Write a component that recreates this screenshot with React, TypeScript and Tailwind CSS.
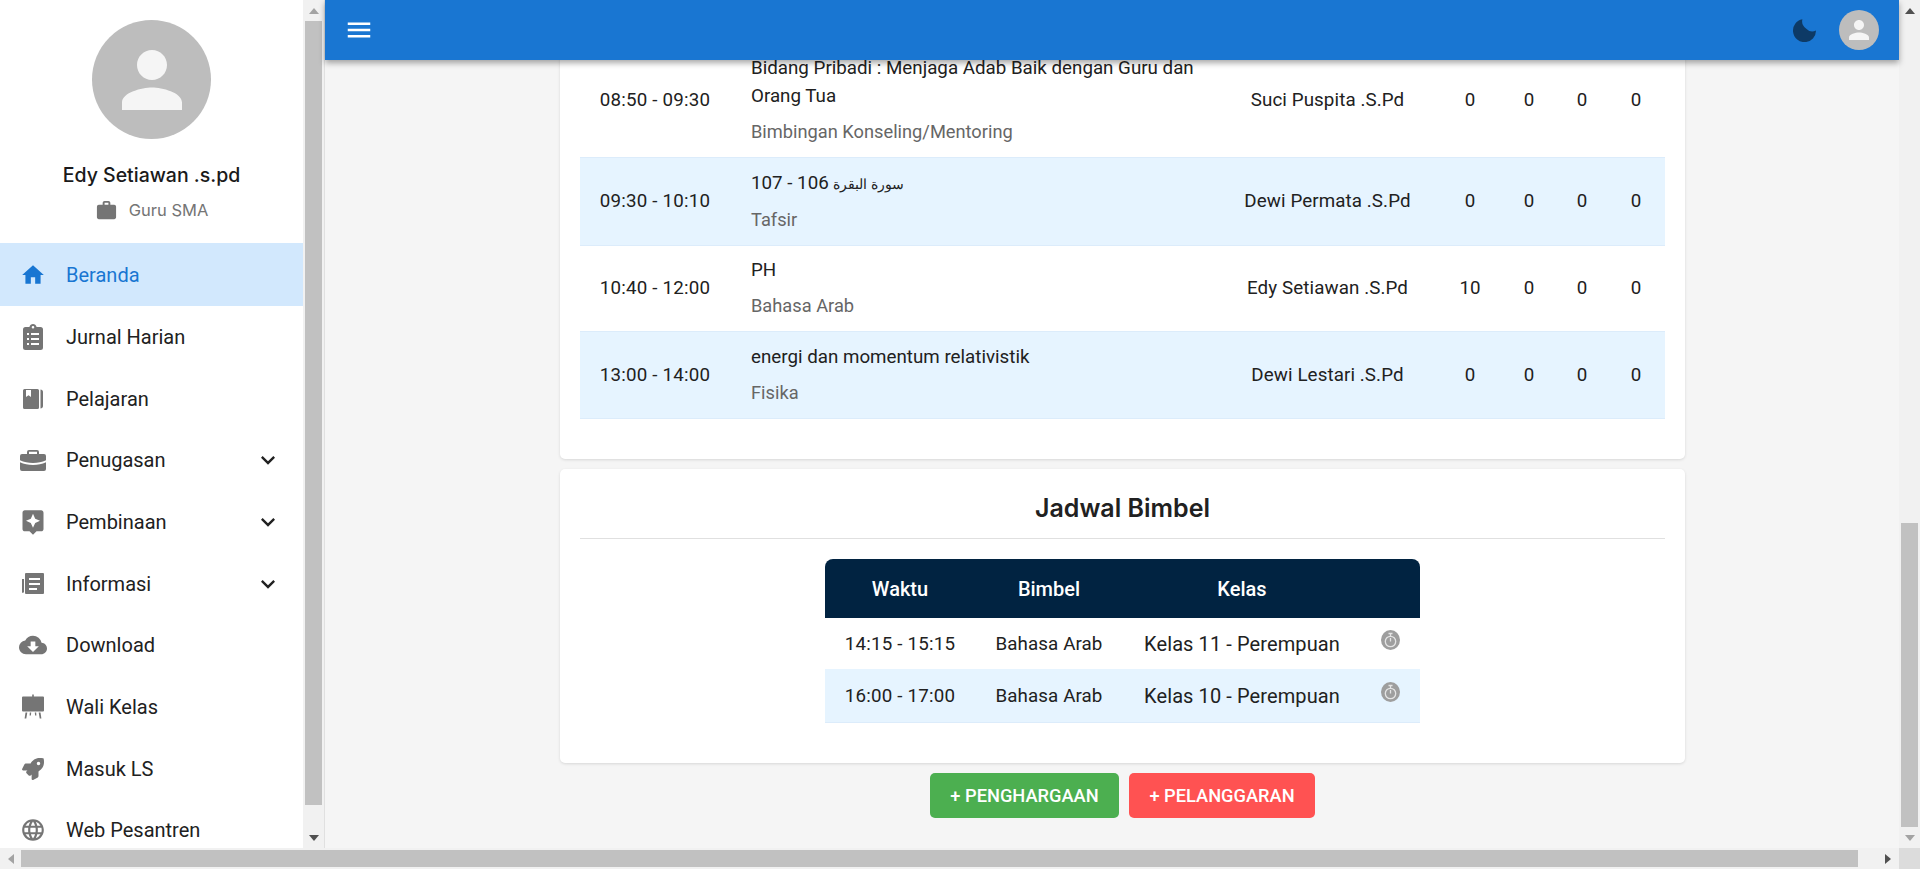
import React from 'react';
import { FaRocket } from 'react-icons/fa';
import { MdAssistant, MdCloudDownload, MdExpandMore, MdHome, MdLanguage, MdMenu, MdPerson, MdWork } from 'react-icons/md';

type IconProps = { className?: string };

const ClipboardListIcon = ({ className }: IconProps) => (
  <svg viewBox="0 0 20 26" className={className} fill="currentColor">
    <path
      fillRule="evenodd"
      d="M2.500 3H6.400C6.900 1.300 8.300 0 10 0s3.100 1.300 3.600 3h3.900A2.500 2.500 0 0 1 20 5.500v18a2.500 2.500 0 0 1-2.500 2.500h-15A2.500 2.500 0 0 1 0 23.500v-18A2.500 2.500 0 0 1 2.500 3zM10 2a1.300 1.300 0 1 0 0 2.600A1.300 1.300 0 0 0 10 2zM4 9v2h2V9H4zm4 0v2h8V9H8zm-4 5v2h2v-2H4zm4 0v2h8v-2H8zm-4 5v2h2v-2H4zm4 0v2h8v-2H8z"
    />
  </svg>
);

const BookIcon = ({ className }: IconProps) => (
  <svg viewBox="0 0 20 20" className={className} fill="currentColor">
    <path fillRule="evenodd" d="M1.500 0h13A1.500 1.500 0 0 1 16 1.500v17a1.500 1.500 0 0 1-1.500 1.500h-13A1.500 1.500 0 0 1 0 18.500v-17A1.500 1.500 0 0 1 1.500 0zM3 1v7l2.500-1.800L8 8V1H3z" />
    <path d="M17.500 .5c1.500.3 2.500 1 2.500 2.500v14c0 1.500-1 2.200-2.500 2.500V.5z" />
  </svg>
);

const BriefcaseIcon = ({ className }: IconProps) => (
  <svg viewBox="0 0 26 21" className={className} fill="currentColor">
    <path fillRule="evenodd" d="M9 0h8a2 2 0 0 1 2 2v2h5a2 2 0 0 1 2 2v4.200c-4 1.800-8 2.800-13 2.800S4 12 0 10.200V6a2 2 0 0 1 2-2h5V2a2 2 0 0 1 2-2zm0 1.800V4h8V1.800H9z" />
    <path d="M0 12.200C4 14 8 15 13 15s9-1 13-2.800V19a2 2 0 0 1-2 2H2a2 2 0 0 1-2-2v-6.800z" />
  </svg>
);

const NewspaperIcon = ({ className }: IconProps) => (
  <svg viewBox="0 0 22 21" className={className} fill="currentColor">
    <path fillRule="evenodd" d="M4 0h17a1 1 0 0 1 1 1v19a1 1 0 0 1-1 1H4a1 1 0 0 1-1-1V1a1 1 0 0 1 1-1zm3 5v2h11V5H7zm0 5v2h11v-2H7zm0 5v2h8v-2H7z" />
    <path d="M0 6h2v13h-.5v1H1a1 1 0 0 1-1-1V6z" />
  </svg>
);

const EaselIcon = ({ className }: IconProps) => (
  <svg viewBox="0 0 24 24" className={className} fill="currentColor">
    <path d="M11.200 0h1.600v2H22a1 1 0 0 1 1 1v13a1 1 0 0 1-1 1H2a1 1 0 0 1-1-1V3a1 1 0 0 1 1-1h9.200V0z" />
    <path d="M4.500 18h1.800l-1 6H3.600l.9-6zM17.700 18h1.800l.9 6h-1.700l-1-6zM8.800 18h1.400l-.3 3H8.600l.2-3zM13.800 18h1.400l.2 3h-1.300l-.3-3z" />
  </svg>
);

const MoonIcon = () => (
  <svg viewBox="0 0 22 22" className="w-[23px] h-[23px] text-[#0d3a66]" fill="currentColor">
    <path d="M9 0.300A11 11 0 1 0 22 11 8 8 0 0 1 13 9.500 8 8 0 0 1 9 0.300z" />
  </svg>
);

const TimerIcon = () => (
  <svg viewBox="0 0 19 20" className="w-[19px] h-[20px]">
    <ellipse cx="9.500" cy="10" rx="9.500" ry="10" fill="#9e9e9e" />
    <g fill="none" stroke="#e4e4e4" strokeWidth="1.300">
      <circle cx="9.500" cy="11.500" r="5.200" />
      <path d="M7.500 3.500h4M9.500 3.500v3M9.500 8v3.500" />
    </g>
  </svg>
);

const Arrow = ({ dir, dark }: { dir: 'up' | 'down' | 'left' | 'right'; dark?: boolean }) => {
  const points = { up: '0,8 5,2 10,8', down: '0,2 10,2 5,8', left: '8,0 8,10 2,5', right: '2,0 2,10 8,5' }[dir];
  return (
    <svg viewBox="0 0 10 10" className="w-[10px] h-[10px]">
      <polygon points={points} fill={dark ? '#505050' : '#a3a3a3'} />
    </svg>
  );
};

const VScrollbar = ({ before, thumb, upDark }: { before: string; thumb: string; upDark?: boolean }) => (
  <div className="w-[21px] shrink-0 bg-[#f1f1f1] flex flex-col items-center">
    <div className="h-[21px] shrink-0 flex items-center justify-center"><Arrow dir="up" dark={upDark} /></div>
    <div className={`w-[17px] ${before}`} />
    <div className={`w-[17px] bg-[#c1c1c1] ${thumb}`} />
    <div className="flex-1" />
    <div className="h-[21px] shrink-0 flex items-center justify-center"><Arrow dir="down" dark={!upDark} /></div>
  </div>
);

const navItems = [
  { label: 'Beranda', icon: <MdHome className="w-[26px] h-[26px]" />, active: true },
  { label: 'Jurnal Harian', icon: <ClipboardListIcon className="w-[20px] h-[26px]" /> },
  { label: 'Pelajaran', icon: <BookIcon className="w-[20px] h-[20px]" /> },
  { label: 'Penugasan', icon: <BriefcaseIcon className="w-[26px] h-[21px]" />, more: true },
  { label: 'Pembinaan', icon: <MdAssistant className="w-[28px] h-[28px]" />, more: true },
  { label: 'Informasi', icon: <NewspaperIcon className="w-[22px] h-[21px]" />, more: true },
  { label: 'Download', icon: <MdCloudDownload className="w-[28px] h-[28px]" /> },
  { label: 'Wali Kelas', icon: <EaselIcon className="w-[24px] h-[25px]" /> },
  { label: 'Masuk LS', icon: <FaRocket className="w-[22px] h-[22px]" /> },
  { label: 'Web Pesantren', icon: <MdLanguage className="w-[26px] h-[26px]" /> },
];

const schedule = [
  { time: '08:50 - 09:30', title: 'Bidang Pribadi : Menjaga Adab Baik dengan Guru dan Orang Tua', subject: 'Bimbingan Konseling/Mentoring', teacher: 'Suci Puspita .S.Pd', nums: [0, 0, 0, 0], height: '' },
  { time: '09:30 - 10:10', title: <><span className="text-[14px]">سورة البقرة</span> 106 - 107</>, subject: 'Tafsir', teacher: 'Dewi Permata .S.Pd', nums: [0, 0, 0, 0], height: 'h-[88px]' },
  { time: '10:40 - 12:00', title: 'PH', subject: 'Bahasa Arab', teacher: 'Edy Setiawan .S.Pd', nums: [10, 0, 0, 0], height: 'h-[86px]' },
  { time: '13:00 - 14:00', title: 'energi dan momentum relativistik', subject: 'Fisika', teacher: 'Dewi Lestari .S.Pd', nums: [0, 0, 0, 0], height: 'h-[87px]' },
];

const bimbel = [
  { time: '14:15 - 15:15', name: 'Bahasa Arab', kelas: 'Kelas 11 - Perempuan' },
  { time: '16:00 - 17:00', name: 'Bahasa Arab', kelas: 'Kelas 10 - Perempuan' },
];

const Sidebar = () => (
  <aside className="w-[303px] shrink-0 bg-white overflow-hidden flex flex-col">
    <div className="pt-5 flex flex-col items-center h-[243px] shrink-0">
      <div className="w-[119px] h-[119px] rounded-full bg-[#bdbdbd] flex items-center justify-center text-[#f5f5f5]">
        <MdPerson className="w-[90px] h-[90px]" />
      </div>
      <div className="mt-[22px] font-['Inter',sans-serif] text-[19.500px] leading-7 font-medium text-[#1a1a1a]">Edy Setiawan .s.pd</div>
      <div className="mt-[9px] flex items-center gap-[11px] text-[#757575]">
        <MdWork className="w-[23px] h-[23px]" />
        <span className="font-['Inter',sans-serif] text-[16.500px] leading-6">Guru SMA</span>
      </div>
    </div>
    <nav className="flex flex-col">
      {navItems.map((item) => (
        <div
          key={item.label}
          className={`shrink-0 flex items-center pr-[21px] ${item.active ? 'h-[63px] bg-[#d2e8fd] text-[#1976d2]' : 'h-[61.700px] text-[#212121]'}`}
        >
          <div className={`w-[66px] shrink-0 flex justify-center ${item.active ? '' : 'text-[#757575]'}`}>{item.icon}</div>
          <span className="flex-1 text-[20px]">{item.label}</span>
          {item.more && <MdExpandMore className="w-[28px] h-[28px] text-[#212121]" />}
        </div>
      ))}
    </nav>
  </aside>
);

const Header = () => (
  <header className="relative z-10 h-[60px] shrink-0 bg-[#1976d2] flex items-center pl-[19px] pr-[20px] shadow-[0_3px_6px_rgba(0,0,0,0.35)]">
    <MdMenu className="w-[30px] h-[30px] text-white" />
    <div className="flex-1" />
    <MoonIcon />
    <div className="ml-[23px] w-10 h-10 rounded-full bg-[#bdbdbd] flex items-center justify-center text-[#f5f5f5]">
      <MdPerson className="w-[30px] h-[30px]" />
    </div>
  </header>
);

const ScheduleTable = () => (
  <table className="w-full table-fixed border-collapse text-[18.750px] text-[#212121]">
    <colgroup>
      <col className="w-[150px]" />
      <col />
      <col className="w-[223px]" />
      <col className="w-[62px]" />
      <col className="w-[56px]" />
      <col className="w-[50px]" />
      <col className="w-[58px]" />
    </colgroup>
    <tbody>
      {schedule.map((row, i) => (
        <tr key={row.time} className={`border-b border-[#dcecfb] ${row.height} ${i % 2 === 1 ? 'bg-[#e6f4ff]' : 'bg-white'}`}>
          <td className="text-center tracking-[0.2px]">{row.time}</td>
          <td className="pl-[21px] pt-[10px] pb-[13px]">
            <div className="leading-7">{row.title}</div>
            <div className="mt-[10px] leading-6 text-[18.250px] text-[#666666]">{row.subject}</div>
          </td>
          <td className="text-center tracking-[0.1px]">{row.teacher}</td>
          {row.nums.map((n, j) => (
            <td key={j} className="text-center">{n}</td>
          ))}
        </tr>
      ))}
    </tbody>
  </table>
);

const BimbelTable = () => (
  <table className="w-[595px] mx-auto table-fixed border-separate border-spacing-0 text-[#212121]">
    <colgroup>
      <col className="w-[150px]" />
      <col className="w-[148px]" />
      <col className="w-[238px]" />
      <col className="w-[59px]" />
    </colgroup>
    <thead>
      <tr className="text-white text-[20px]">
        <th className="h-[59px] font-medium bg-[#012341] rounded-tl-[8px]">Waktu</th>
        <th className="font-medium bg-[#012341]">Bimbel</th>
        <th className="font-medium bg-[#012341]">Kelas</th>
        <th className="bg-[#012341] rounded-tr-[8px]" />
      </tr>
    </thead>
    <tbody>
      {bimbel.map((row, i) => (
        <tr key={row.time} className={i % 2 === 1 ? 'bg-[#e6f4ff]' : 'bg-white'}>
          <td className={`pt-[2px] text-center text-[18.750px] tracking-[0.2px] ${i === 1 ? 'h-[54px] border-b border-[#dcecfb]' : 'h-[51px]'}`}>{row.time}</td>
          <td className={`pt-[2px] text-center text-[18.750px] tracking-[0.1px] ${i === 1 ? 'border-b border-[#dcecfb]' : ''}`}>{row.name}</td>
          <td className={`pt-[1px] text-center text-[20px] tracking-[0.1px] ${i === 1 ? 'border-b border-[#dcecfb]' : ''}`}>{row.kelas}</td>
          <td className={`pb-[7px] ${i === 1 ? 'border-b border-[#dcecfb]' : ''}`}><div className="flex justify-center"><TimerIcon /></div></td>
        </tr>
      ))}
    </tbody>
  </table>
);

export default function App() {
  return (
    <div className="w-[1920px] h-[869px] overflow-hidden flex flex-col font-['Roboto',sans-serif] bg-[#f5f5f5]">
      <div className="flex-1 min-h-0 flex">
        <Sidebar />
        <VScrollbar before="h-0" thumb="h-[784px]" />
        <div className="w-px shrink-0 bg-[#e0e0e0]" />
        <main className="flex-1 min-w-0 flex flex-col">
          <Header />
          <div className="flex-1 min-h-0 overflow-hidden flex flex-col justify-end items-stretch pl-[235px] pr-[214px] pb-[30px]">
            <section className="shrink-0 bg-white rounded-[5px] shadow-[0_1px_3px_rgba(0,0,0,0.12)] px-5 pb-10">
              <ScheduleTable />
            </section>
            <section className="shrink-0 mt-[10px] bg-white rounded-[5px] shadow-[0_1px_3px_rgba(0,0,0,0.12)] px-5 pb-10">
              <h2 className="h-[70px] pt-[10px] flex items-center justify-center font-['Inter',sans-serif] text-[25px] font-semibold text-[#212121] border-b border-[#e0e0e0]">Jadwal Bimbel</h2>
              <div className="mt-5"><BimbelTable /></div>
            </section>
            <div className="shrink-0 mt-[10px] flex justify-center gap-[10px] text-[18.250px] font-medium text-white">
              <button className="w-[189px] h-[45px] rounded-[5px] bg-[#4caf50]">+ PENGHARGAAN</button>
              <button className="w-[186px] h-[45px] rounded-[5px] bg-[#ff5252]">+ PELANGGARAN</button>
            </div>
          </div>
        </main>
        <VScrollbar before="h-[502px]" thumb="h-[304px]" upDark />
      </div>
      <div className="h-[21px] shrink-0 bg-[#f1f1f1] flex items-center">
        <div className="w-[21px] flex justify-center"><Arrow dir="left" /></div>
        <div className="w-[1837px] h-[17px] bg-[#c1c1c1]" />
        <div className="w-[41px] flex justify-center pl-[19px]"><Arrow dir="right" dark /></div>
        <div className="w-[21px] h-[21px] bg-[#dcdcdc]" />
      </div>
    </div>
  );
}
